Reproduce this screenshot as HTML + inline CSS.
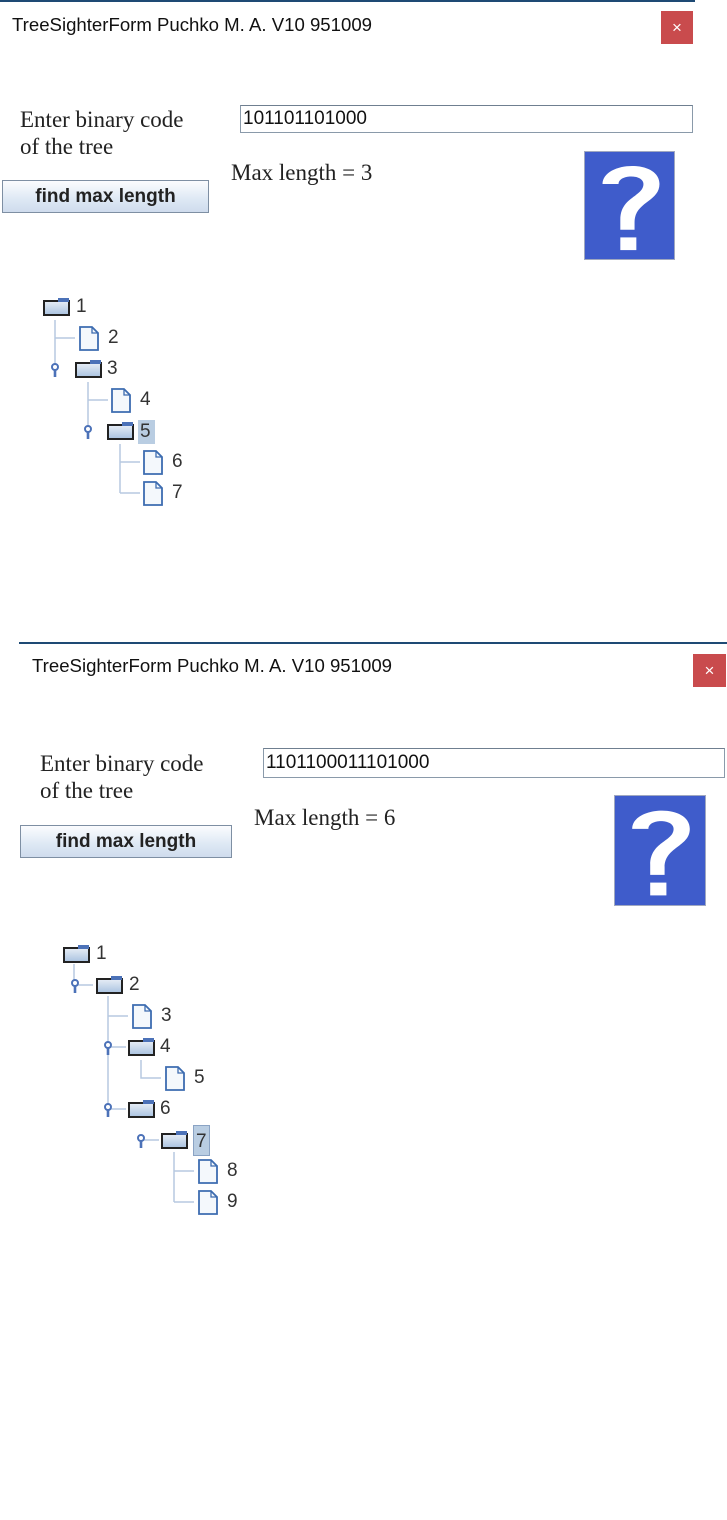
<!DOCTYPE html>
<html><head><meta charset="utf-8"><style>
*{margin:0;padding:0;box-sizing:border-box}
body{width:727px;height:1520px;background:#fff;position:relative;overflow:hidden;font-family:"Liberation Sans",sans-serif}
.a{position:absolute}
.title{font-size:18.6px;color:#111;white-space:nowrap}
.close{background:#c94b4d;color:#fff;font-size:17px;text-align:center}
.lbl{font-family:"Liberation Serif",serif;font-size:23px;color:#222;line-height:27px;white-space:nowrap}
.inp{border:1px solid #8a9aaa;border-top-color:#6f7f90;background:#fff;font-size:19px;color:#111;padding-left:2px}
.btn{border:1px solid #7e8fa3;background:linear-gradient(#fbfcfe,#dde8f4 60%,#cfdced);font-weight:bold;font-size:19px;color:#222;text-align:center}
.help{background:#3f5ccb;border:1px solid #a0a8c0}
.t{font-size:19px;color:#333;position:absolute;line-height:20px}
.sel{background:#b9cde2}
</style></head><body>
<div class="a" style="left:0;top:0;width:695px;height:2px;background:#1e4a74"></div>
<div class="a title" style="left:12px;top:14px">TreeSighterForm Puchko M. A. V10 951009</div>
<div class="a close" style="left:661px;top:11px;width:32px;height:33px;line-height:33px">×</div>
<div class="a lbl" style="left:20px;top:106px">Enter binary code<br>of the tree</div>
<div class="a inp" style="left:240px;top:105px;width:453px;height:28px;line-height:26px">101101101000</div>
<div class="a lbl" style="left:231px;top:159px">Max length = 3</div>
<div class="a btn" style="left:2px;top:180px;width:207px;height:33px;line-height:31px">find max length</div>
<div class="a help" style="left:584px;top:151px;width:91px;height:109px"></div>

<div class="a" style="left:19px;top:642px;width:708px;height:2px;background:#1e4a74"></div>
<div class="a title" style="left:32px;top:655px">TreeSighterForm Puchko M. A. V10 951009</div>
<div class="a close" style="left:693px;top:654px;width:33px;height:33px;line-height:33px">×</div>
<div class="a lbl" style="left:40px;top:750px">Enter binary code<br>of the tree</div>
<div class="a inp" style="left:263px;top:748px;width:462px;height:30px;line-height:28px">1101100011101000</div>
<div class="a lbl" style="left:254px;top:804px">Max length = 6</div>
<div class="a btn" style="left:20px;top:825px;width:212px;height:33px;line-height:31px">find max length</div>
<div class="a help" style="left:614px;top:795px;width:92px;height:111px"></div>

<svg class="a" style="left:0;top:0" width="727" height="1520" viewBox="0 0 727 1520">
<defs>
<linearGradient id="fg" x1="0" y1="0" x2="0" y2="1"><stop offset="0" stop-color="#e8eef6"/><stop offset="1" stop-color="#a9c2e0"/></linearGradient>
<g id="fold"><rect x="1" y="3" width="25" height="14" fill="url(#fg)" stroke="#222" stroke-width="2"/><rect x="15" y="0" width="11" height="4" fill="#4c72b8"/></g>
<g id="doc"><path d="M1 1H13L19 7V24H1Z" fill="#f4f8fc" stroke="#3d6cb0" stroke-width="1.8"/><path d="M13 1V7H19" fill="none" stroke="#3d6cb0" stroke-width="1.3"/></g>
<g id="exp"><circle cx="0" cy="-2" r="3" fill="#fff" stroke="#4c72b8" stroke-width="2"/><rect x="-1.3" y="0" width="2.6" height="8" fill="#4c72b8"/></g>
<g id="q"><path d="M-16 -22 C-16 -40 16 -42 16 -22 C16 -8 2 -8 2 8 V14 H-6 V6 C-6 -12 7 -12 7 -22 C7 -30 -7 -30 -7 -22 Z" fill="#fff"/><rect x="-6" y="20" width="9" height="10" fill="#fff"/></g>
</defs>
<g transform="translate(631,212) scale(1.78 1.27)"><use href="#q"/></g>
<g transform="translate(661,857) scale(1.8 1.28)"><use href="#q"/></g>
<g stroke="#b7c9e0" stroke-width="1.5" fill="none">
<path d="M55 320V366M55 338H75M88 382V428M88 400H108M120 444V493M120 462H140M120 493H140"/>
<path d="M74 964V982M108 996V1109M108 1016H128M141 1060V1078H161M174 1152V1202M174 1171H194M174 1202H194M108 1047H126M108 1109H126M141 1140H159M74 985H93"/>
</g>
<use href="#fold" x="43" y="298"/><use href="#doc" x="79" y="326"/>
<use href="#exp" x="55" y="369"/><use href="#fold" x="75" y="360"/>
<use href="#doc" x="111" y="388"/>
<use href="#exp" x="88" y="431"/><use href="#fold" x="107" y="422"/>
<use href="#doc" x="143" y="450"/><use href="#doc" x="143" y="481"/>

<use href="#fold" x="63" y="945"/>
<use href="#exp" x="75" y="985"/><use href="#fold" x="96" y="976"/>
<use href="#doc" x="132" y="1004"/>
<use href="#exp" x="108" y="1047"/><use href="#fold" x="128" y="1038"/>
<use href="#doc" x="165" y="1066"/>
<use href="#exp" x="108" y="1109"/><use href="#fold" x="128" y="1100"/>
<use href="#exp" x="141" y="1140"/><use href="#fold" x="161" y="1131"/>
<use href="#doc" x="198" y="1159"/><use href="#doc" x="198" y="1190"/>
</svg>

<div class="t" style="left:76px;top:297px">1</div>
<div class="t" style="left:108px;top:328px">2</div>
<div class="t" style="left:107px;top:359px">3</div>
<div class="t" style="left:140px;top:390px">4</div>
<div class="t sel" style="left:138px;top:420px;width:17px;height:24px;line-height:24px;padding-left:2px">5</div>
<div class="t" style="left:172px;top:452px">6</div>
<div class="t" style="left:172px;top:483px">7</div>

<div class="t" style="left:96px;top:944px">1</div>
<div class="t" style="left:129px;top:975px">2</div>
<div class="t" style="left:161px;top:1006px">3</div>
<div class="t" style="left:160px;top:1037px">4</div>
<div class="t" style="left:194px;top:1068px">5</div>
<div class="t" style="left:160px;top:1099px">6</div>
<div class="t sel" style="left:193px;top:1125px;width:17px;height:31px;line-height:31px;padding-left:2px;border:1px solid #8aa3c4">7</div>
<div class="t" style="left:227px;top:1161px">8</div>
<div class="t" style="left:227px;top:1192px">9</div>
</body></html>
